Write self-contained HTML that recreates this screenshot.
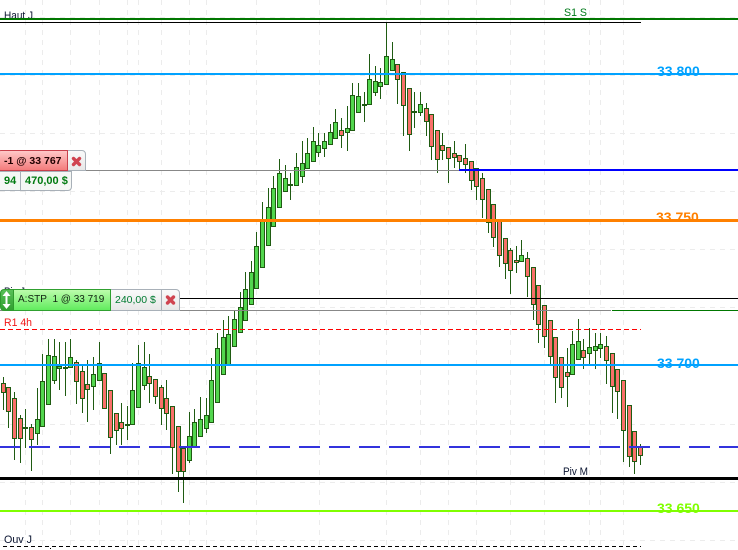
<!DOCTYPE html>
<html><head><meta charset="utf-8"><style>
html,body{margin:0;padding:0;background:#fff;width:738px;height:550px;overflow:hidden}
#c{position:relative;width:738px;height:550px;overflow:hidden;font-family:"Liberation Sans",sans-serif}
svg{position:absolute;left:0;top:0}
.b{position:absolute;box-sizing:border-box;white-space:nowrap;font-size:11px;line-height:18px}
</style></head><body><div id="c">
<svg width="738" height="550" viewBox="0 0 738 550" font-family="'Liberation Sans',sans-serif">
<g stroke="#ececec" stroke-width="1" stroke-dasharray="5 5" fill="none" shape-rendering="crispEdges">
<path d="M0 17.5H738M0 75.5H738M0 133.5H738M0 191.5H738M0 249.5H738M0 307.5H738M0 365.5H738M0 424.5H738M0 482.5H738M0 540.5H738"/>
<path d="M25.5 0V550M42.5 0V550M70.5 0V550M99.5 0V550M127.5 0V550M138.5 0V550M161.5 0V550M189.5 0V550M206.5 0V550M256.5 0V550M319.5 0V550M386.5 0V550M420.5 0V550M448.5 0V550M476.5 0V550M510.5 0V550M544.5 0V550M589.5 0V550M600.5 0V550M623.5 0V550"/>
</g>
<g font-size="11">
<text x="4" y="19" fill="#0a1430" textLength="29" lengthAdjust="spacingAndGlyphs">Haut J</text>
<text x="564" y="16" fill="#007a1a" textLength="23" lengthAdjust="spacingAndGlyphs">S1 S</text>
<text x="4" y="295" fill="#0a1430" textLength="21" lengthAdjust="spacingAndGlyphs">Piv J</text>
<text x="4" y="326" fill="#f01818" textLength="28" lengthAdjust="spacingAndGlyphs">R1 4h</text>
<text x="563" y="475" fill="#0a1430" textLength="25" lengthAdjust="spacingAndGlyphs">Piv M</text>
<text x="4" y="543" fill="#0a1430" textLength="28" lengthAdjust="spacingAndGlyphs">Ouv J</text>
</g>
<path fill="none" stroke="#1f5b12" stroke-width="1" shape-rendering="crispEdges" d="M3.5 377V410M8.5 387V428M14.5 392V460M20.5 415V463M25.5 409V448M31.5 424V471M37.5 388V445M42.5 354V426M48.5 339V404M54.5 339V384M59.5 342V390M65.5 342V396M70.5 339V368M76.5 360V404M82.5 366V413M87.5 360V422M93.5 357V410M99.5 342V380M104.5 373V408M110.5 390V454M116.5 413V445M121.5 403V445M127.5 406V440M132.5 363V424M138.5 345V407M144.5 342V390M149.5 354V403M155.5 379V404M161.5 385V425M166.5 380V430M172.5 406V474M178.5 426V492M183.5 448V503M189.5 412V463M194.5 409V446M200.5 397V436M206.5 398V433M211.5 358V422M217.5 333V402M223.5 320V374M228.5 316V365M234.5 310V346M240.5 292V332M245.5 272V320M251.5 261V304M256.5 232V288M262.5 202V267M268.5 188V245M273.5 176V226M279.5 159V207M285.5 165V191M290.5 173V200M296.5 153V185M302.5 141V183M307.5 138V168M313.5 127V161M318.5 133V157M324.5 133V157M330.5 124V144M335.5 109V138M341.5 118V148M347.5 106V151M352.5 83V130M358.5 83V112M364.5 92V122M369.5 54V104M375.5 66V96M380.5 68V99M386.5 22V84M392.5 42V70M397.5 64V104M403.5 72V136M409.5 88V151M414.5 92V128M420.5 92V116M426.5 103V136M431.5 114V160M437.5 130V173M442.5 133V160M448.5 147V183M454.5 141V168M459.5 155V170M465.5 144V173M471.5 161V190M476.5 168V200M482.5 173V218M488.5 189V233M493.5 204V247M499.5 221V267M505.5 238V279M510.5 248V294M516.5 246V273M521.5 240V262M527.5 252V297M533.5 267V320M538.5 285V343M544.5 305V348M550.5 320V364M555.5 337V403M561.5 357V398M567.5 348V407M572.5 331V374M578.5 319V359M583.5 339V369M589.5 328V364M595.5 333V369M600.5 333V358M606.5 336V384M612.5 353V413M617.5 369V419M623.5 380V462M629.5 405V467M634.5 431V474M640.5 444V465"/>
<path fill="#f9706a" stroke="#1f5b12" stroke-width="1" d="M1.5 383.5h4v9h-4zM6.5 387.5h4v24h-4zM12.5 398.5h4v40h-4zM18.5 418.5h4v20h-4zM29.5 427.5h4v12h-4zM74.5 362.5h4v19h-4zM80.5 371.5h4v27h-4zM85.5 384.5h4v5h-4zM102.5 373.5h4v35h-4zM108.5 390.5h4v47h-4zM114.5 413.5h4v17h-4zM119.5 422.5h4v6h-4zM147.5 376.5h4v7h-4zM153.5 379.5h4v17h-4zM159.5 387.5h4v21h-4zM164.5 398.5h4v15h-4zM170.5 406.5h4v41h-4zM176.5 426.5h4v45h-4zM181.5 448.5h4v23h-4zM339.5 130.5h4v5h-4zM395.5 64.5h4v15h-4zM401.5 72.5h4v33h-4zM407.5 88.5h4v46h-4zM424.5 108.5h4v13h-4zM429.5 114.5h4v32h-4zM435.5 130.5h4v29h-4zM440.5 145.5h4v5h-4zM446.5 147.5h4v11h-4zM452.5 153.5h4v4h-4zM457.5 155.5h4v6h-4zM463.5 158.5h4v6h-4zM469.5 161.5h4v19h-4zM474.5 168.5h4v18h-4zM480.5 178.5h4v21h-4zM486.5 189.5h4v33h-4zM491.5 204.5h4v33h-4zM497.5 221.5h4v34h-4zM503.5 238.5h4v25h-4zM508.5 250.5h4v20h-4zM514.5 260.5h4v2h-4zM525.5 258.5h4v18h-4zM531.5 267.5h4v37h-4zM536.5 285.5h4v39h-4zM542.5 305.5h4v31h-4zM548.5 320.5h4v36h-4zM553.5 337.5h4v40h-4zM559.5 357.5h4v30h-4zM565.5 372.5h4v4h-4zM581.5 350.5h4v7h-4zM604.5 346.5h4v14h-4zM610.5 353.5h4v33h-4zM615.5 369.5h4v22h-4zM621.5 380.5h4v50h-4zM627.5 405.5h4v51h-4zM632.5 431.5h4v30h-4zM638.5 447.5h4v8h-4z"/>
<path fill="#52d64e" stroke="#1f5b12" stroke-width="1" d="M23.5 427.5h4v1h-4zM35.5 419.5h4v14h-4zM40.5 381.5h4v45h-4zM46.5 355.5h4v49h-4zM52.5 356.5h4v24h-4zM57.5 366.5h4v2h-4zM63.5 367.5h4v1h-4zM68.5 357.5h4v10h-4zM91.5 374.5h4v12h-4zM97.5 363.5h4v17h-4zM125.5 424.5h4v1h-4zM130.5 390.5h4v34h-4zM136.5 363.5h4v44h-4zM142.5 367.5h4v18h-4zM187.5 436.5h4v24h-4zM192.5 422.5h4v24h-4zM198.5 419.5h4v17h-4zM204.5 415.5h4v13h-4zM209.5 380.5h4v42h-4zM215.5 348.5h4v54h-4zM221.5 337.5h4v37h-4zM226.5 334.5h4v31h-4zM232.5 319.5h4v27h-4zM238.5 307.5h4v25h-4zM243.5 289.5h4v31h-4zM249.5 272.5h4v32h-4zM254.5 246.5h4v42h-4zM260.5 221.5h4v46h-4zM266.5 207.5h4v38h-4zM271.5 188.5h4v38h-4zM277.5 173.5h4v34h-4zM283.5 178.5h4v13h-4zM288.5 184.5h4v1h-4zM294.5 167.5h4v18h-4zM300.5 163.5h4v13h-4zM305.5 153.5h4v15h-4zM311.5 141.5h4v20h-4zM316.5 145.5h4v7h-4zM322.5 141.5h4v7h-4zM328.5 132.5h4v12h-4zM333.5 122.5h4v16h-4zM345.5 128.5h4v4h-4zM350.5 95.5h4v35h-4zM356.5 96.5h4v16h-4zM362.5 104.5h4v1h-4zM367.5 79.5h4v25h-4zM373.5 81.5h4v11h-4zM378.5 82.5h4v4h-4zM384.5 56.5h4v28h-4zM390.5 59.5h4v11h-4zM412.5 111.5h4v1h-4zM418.5 104.5h4v8h-4zM519.5 255.5h4v6h-4zM570.5 344.5h4v30h-4zM576.5 341.5h4v18h-4zM587.5 347.5h4v6h-4zM593.5 346.5h4v4h-4zM598.5 344.5h4v4h-4z"/>
<g shape-rendering="crispEdges" fill="none">
<path stroke="#007700" stroke-width="2" d="M0 19H738"/>
<path stroke="#000" stroke-width="1" d="M0 22.5H641"/>
<path stroke="#00a2ff" stroke-width="2" d="M0 74H738"/>
<path stroke="#888" stroke-width="1" d="M0 170.5H459"/>
<path stroke="#0000ff" stroke-width="2" d="M459 170H738"/>
<path stroke="#ff8000" stroke-width="3" d="M0 220.5H738"/>
<path stroke="#000" stroke-width="1" d="M180 298.5H738"/>
<path stroke="#888" stroke-width="1" d="M0 310.5H611"/>
<path stroke="#007700" stroke-width="1" d="M612 310.5H738"/>
<path stroke="#ff0000" stroke-width="1" stroke-dasharray="5 3" d="M0 329.5H641"/>
<path stroke="#00a2ff" stroke-width="2" d="M0 365H738"/>
<path stroke="#3333dd" stroke-width="2" stroke-dasharray="21 9" d="M-1 447H738"/>
<path stroke="#000" stroke-width="3" d="M0 478.5H738"/>
<path stroke="#80ff00" stroke-width="2" d="M0 511H738"/>
<path stroke="#000" stroke-width="1" stroke-dasharray="4 3" d="M3 546.5H641"/>
<path stroke="#000" stroke-width="1" d="M50 548.5H51"/>
</g>
<g font-size="14" font-weight="bold">
<text x="657" y="76" fill="#00a2ff">33 800</text>
<text x="656" y="222" fill="#ff8000">33 750</text>
<text x="657" y="368" fill="#00a2ff">33 700</text>
<text x="657" y="513" fill="#80ff00">33 650</text>
</g>
</svg>

<div class="b" style="left:-2px;top:171px;width:74px;height:20px;background:#f5f7f5;border:1px solid #a8b0b8;border-radius:0 0 4px 0"></div>
<div class="b" style="left:20px;top:171px;width:1px;height:20px;background:#a8b0b8"></div>
<div class="b" style="left:4px;top:172px;font-weight:bold;color:#007a10">94</div>
<div class="b" style="left:25px;top:172px;font-weight:bold;color:#007a10">470,00 $</div>
<div class="b" style="left:67px;top:150px;width:19px;height:21px;background:linear-gradient(#fafafa,#e8e8e8);border:1px solid #a8b0b8;border-radius:0 4px 0 0"></div>
<div class="b" style="left:-2px;top:150px;width:70px;height:21px;background:linear-gradient(#ffc8c8,#f47c7c);border:1px solid #c8404c;border-radius:3px 0 0 3px"></div>
<div class="b" style="left:4px;top:152px;font-size:10.5px;font-weight:bold;color:#200000">-1 @ 33 767</div>
<svg width="738" height="550" style="pointer-events:none"><path d="M73.5 158.5l6 6M79.5 158.5l-6 6" stroke="#d04450" stroke-width="3.4" stroke-linecap="round"/></svg>

<div class="b" style="left:110px;top:289px;width:52px;height:22px;background:linear-gradient(#fafafa,#e8e8e8);border:1px solid #a8b0b8;border-left:0"></div>
<div class="b" style="left:161px;top:289px;width:19px;height:22px;background:linear-gradient(#fafafa,#e8e8e8);border:1px solid #a8b0b8;border-radius:0 4px 0 0"></div>
<div class="b" style="left:13px;top:289px;width:98px;height:22px;background:linear-gradient(#bcfcac,#62ec5e);border:1px solid #30a030"></div>
<div class="b" style="left:0;top:289px;width:14px;height:22px;background:linear-gradient(#58c058,#30a030);border:1px solid #2e9a2e;border-radius:4px 0 0 4px"></div>
<div class="b" style="left:18px;top:291px;font-size:10px;color:#102010">A:STP&nbsp; 1 @ 33 719</div>
<div class="b" style="left:115px;top:291px;font-size:10.5px;color:#007a30">240,00 $</div>
<svg width="738" height="550" style="pointer-events:none">
<path d="M6.5 293V307" stroke="#fff" stroke-width="2"/>
<path d="M6.5 291l4 5h-8zM6.5 309l4-5h-8z" fill="#fff"/>
<path d="M167.5 297l6 6M173.5 297l-6 6" stroke="#d04450" stroke-width="3.4" stroke-linecap="round"/>
</svg>
</div></body></html>
